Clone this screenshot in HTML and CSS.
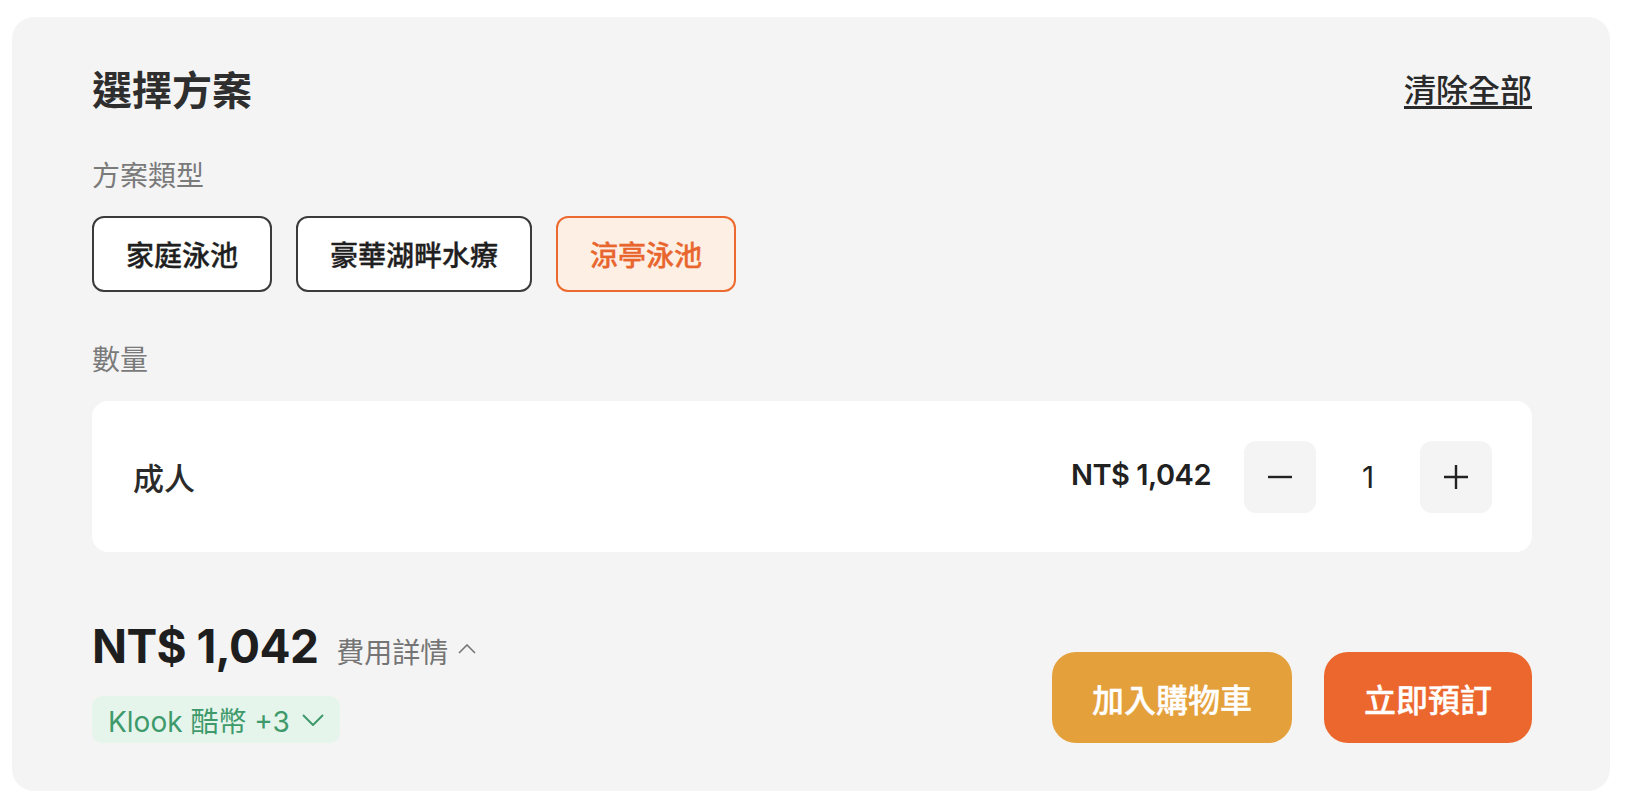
FILE: index.html
```html
<!DOCTYPE html>
<html lang="zh-Hant">
<head>
<meta charset="utf-8">
<title>選擇方案</title>
<link rel="stylesheet" href="styles.css">
</head>
<body>
<div class="card">
  <div class="header">
    <h2 class="title">選擇方案</h2>
    <a class="clear" href="#">清除全部</a>
  </div>

  <div class="label">方案類型</div>
  <div class="options">
    <button class="opt">家庭泳池</button>
    <button class="opt">豪華湖畔水療</button>
    <button class="opt opt-active">涼亭泳池</button>
  </div>

  <div class="label label-qty">數量</div>
  <div class="qty-panel">
    <div class="qty-name">成人</div>
    <div class="qty-right">
      <div class="qty-price">NT$ 1,042</div>
      <div class="stepper">
        <button class="step-btn" aria-label="減少">
          <svg width="26" height="26" viewBox="0 0 26 26"><path d="M1 13h24" stroke="#222" stroke-width="2.4" fill="none"/></svg>
        </button>
        <div class="step-num">1</div>
        <button class="step-btn" aria-label="增加">
          <svg width="26" height="26" viewBox="0 0 26 26"><path d="M1 13h24M13 1v24" stroke="#222" stroke-width="2.4" fill="none"/></svg>
        </button>
      </div>
    </div>
  </div>

  <div class="footer">
    <div class="total">
      <div class="total-row">
        <span class="total-price">NT$ 1,042</span>
        <span class="details">費用詳情
          <svg class="chev-up" width="18" height="10" viewBox="0 0 18 10"><path d="M1 9l8-8 8 8" stroke="#757575" stroke-width="1.6" fill="none"/></svg>
        </span>
      </div>
      <div class="coins">Klook 酷幣 +3
        <svg class="chev-down" width="22" height="12" viewBox="0 0 22 12"><path d="M1 1l10 10 10-10" stroke="#3f9a6b" stroke-width="2" fill="none"/></svg>
      </div>
    </div>
    <div class="actions">
      <button class="btn btn-cart">加入購物車</button>
      <button class="btn btn-book">立即預訂</button>
    </div>
  </div>
</div>
</body>
</html>
```

FILE: styles.css
```css
* {
  box-sizing: border-box;
}

html, body {
  margin: 0;
  background: #ffffff;
}

body {
  padding: 17px 16px 20px 12px;
  font-family: "Inter", "Noto Sans CJK TC", "Noto Sans", sans-serif;
  color: #212121;
}

.card {
  background: #f4f4f4;
  border-radius: 22px;
  padding: 46px 78px 48px 80px;
}

.header {
  display: flex;
  align-items: center;
  justify-content: space-between;
  height: 56px;
}

.title {
  margin: 0;
  font-size: 40px;
  line-height: 56px;
  font-weight: 700;
  color: #2e2e2e;
}

.clear {
  font-size: 32px;
  line-height: 44px;
  font-weight: 500;
  color: #2a2a2a;
  text-decoration: underline;
  text-decoration-thickness: 3px;
  text-underline-offset: 4px;
}

.label {
  margin-top: 37px;
  font-size: 28px;
  line-height: 40px;
  color: #7a7a7a;
}

.label-qty {
  margin-top: 48px;
}

.options {
  display: flex;
  gap: 24px;
  margin-top: 20px;
}

.opt {
  height: 76px;
  padding: 0 32px;
  border: 2px solid #3b3b3b;
  border-radius: 12px;
  background: #ffffff;
  font-family: inherit;
  font-size: 28px;
  font-weight: 500;
  -webkit-text-stroke: 0.35px currentColor;
  color: #1f1f1f;
}

.opt-active {
  border-color: #ec6a2f;
  background: #fdefe4;
  color: #e8652d;
}

.qty-panel {
  margin-top: 21px;
  height: 151px;
  background: #ffffff;
  border-radius: 16px;
  padding: 0 40px 0 41px;
  display: flex;
  align-items: center;
  justify-content: space-between;
}

.qty-name {
  font-size: 31px;
  font-weight: 500;
  color: #2a2a2a;
}

.qty-right {
  display: flex;
  align-items: center;
  gap: 33px;
}

.qty-price {
  font-size: 29px;
  font-weight: 600;
  letter-spacing: -0.5px;
  color: #212121;
  margin-top: -4px;
}

.stepper {
  display: flex;
  align-items: center;
}

.step-btn {
  width: 72px;
  height: 72px;
  border: 0;
  border-radius: 12px;
  background: #f4f4f4;
  display: flex;
  align-items: center;
  justify-content: center;
  padding: 0;
}

.step-num {
  width: 104px;
  text-align: center;
  font-size: 30px;
  color: #212121;
}

.footer {
  margin-top: 64px;
  display: flex;
  align-items: flex-end;
  justify-content: space-between;
}

.total-row {
  display: flex;
  align-items: baseline;
  gap: 18px;
  height: 60px;
}

.total-price {
  font-size: 46px;
  line-height: 60px;
  font-weight: 700;
  letter-spacing: -0.6px;
  color: #1e1e1e;
}

.details {
  font-size: 28px;
  color: #757575;
  display: inline-flex;
  align-items: center;
  gap: 10px;
}

.chev-up {
  margin-top: -4px;
}

.coins {
  margin-top: 20px;
  display: inline-flex;
  align-items: center;
  gap: 12px;
  height: 47px;
  padding: 0 16px;
  border-radius: 10px;
  background: #e6f5ec;
  color: #3f9a6b;
  font-size: 28px;
}

.actions {
  display: flex;
  gap: 32px;
}

.btn {
  height: 91px;
  padding: 0 40px;
  border: 0;
  border-radius: 24px;
  font-family: inherit;
  font-size: 32px;
  font-weight: 500;
  -webkit-text-stroke: 0.35px currentColor;
  color: #ffffff;
}

.btn-cart {
  background: #e4a03b;
}

.btn-book {
  background: #ec672e;
}
```
